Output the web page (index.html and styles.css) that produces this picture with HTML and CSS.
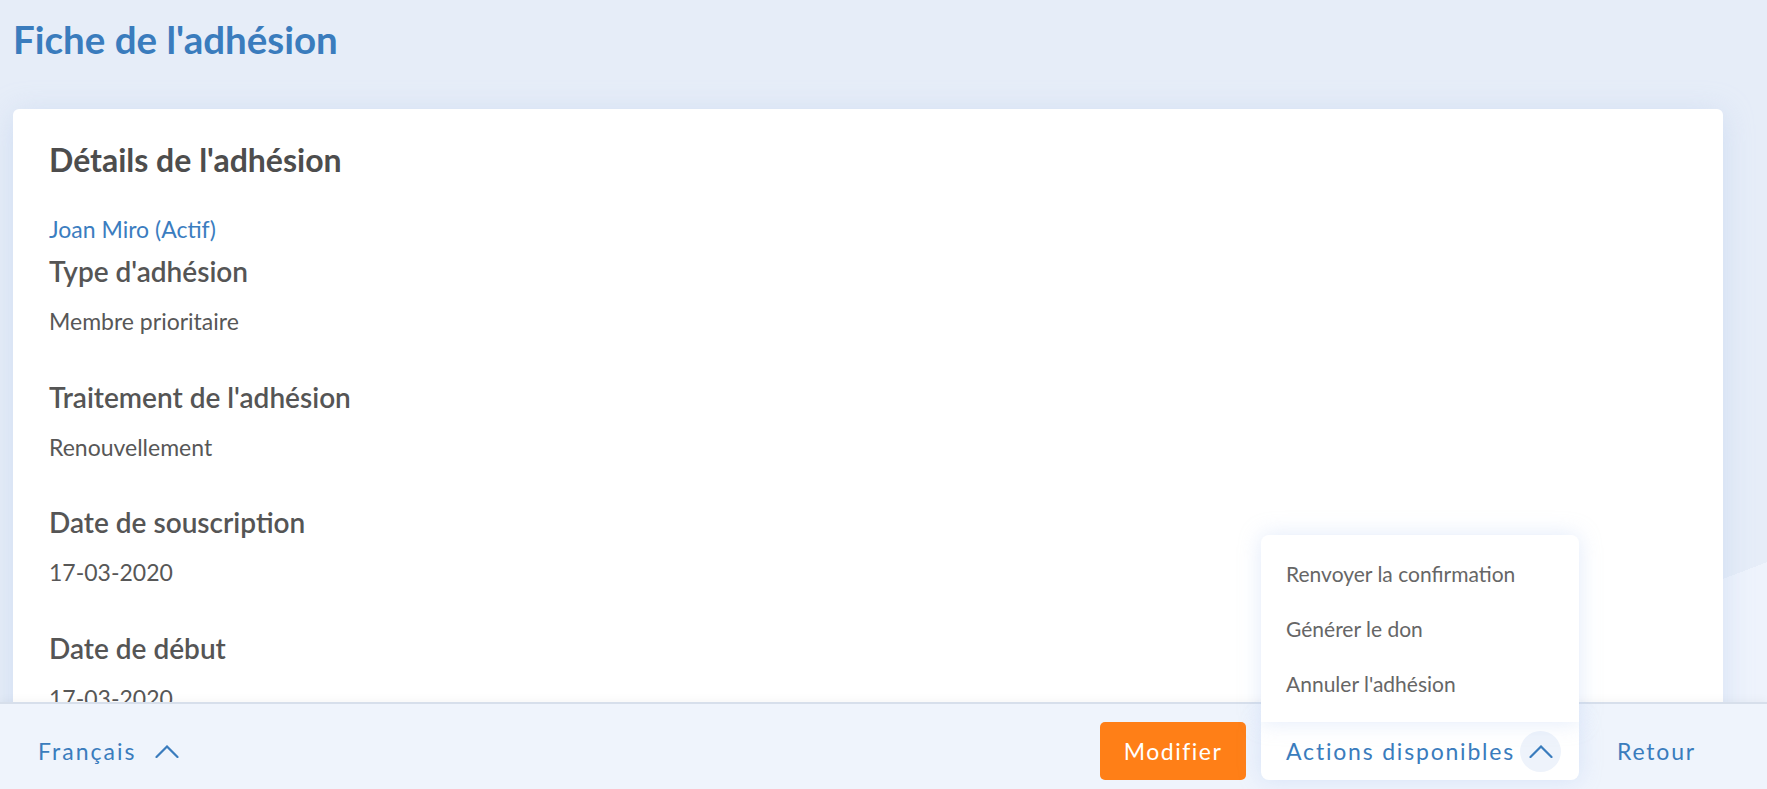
FILE: index.html
```html
<!DOCTYPE html>
<html lang="fr">
<head>
<meta charset="utf-8">
<title>Fiche de l'adhésion</title>
<link rel="stylesheet" href="styles.css">
</head>
<body>
<div class="page">
  <header class="page-header">
    <h1 class="page-title">Fiche de l'adhésion</h1>
  </header>
  <main class="page-main">
    <section class="card">
      <h2 class="card-title">Détails de l'adhésion</h2>
      <a class="member-link" href="#">Joan Miro (Actif)</a>
      <dl class="fields">
        <div class="field">
          <dt class="field-label">Type d'adhésion</dt>
          <dd class="field-value">Membre prioritaire</dd>
        </div>
        <div class="field">
          <dt class="field-label">Traitement de l'adhésion</dt>
          <dd class="field-value">Renouvellement</dd>
        </div>
        <div class="field">
          <dt class="field-label">Date de souscription</dt>
          <dd class="field-value">17-03-2020</dd>
        </div>
        <div class="field">
          <dt class="field-label">Date de début</dt>
          <dd class="field-value">17-03-2020</dd>
        </div>
      </dl>
    </section>
  </main>
  <footer class="page-footer">
    <button class="lang" type="button">
      <span>Français</span>
      <svg class="chev" viewBox="0 0 24 13" width="24" height="13"><path d="M1.5 12 L12 1.5 L22.5 12"/></svg>
    </button>
    <div class="footer-actions">
      <button class="btn-primary" type="button">Modifier</button>
      <div class="actions">
        <ul class="actions-menu">
          <li class="actions-item">Renvoyer la confirmation</li>
          <li class="actions-item">Générer le don</li>
          <li class="actions-item">Annuler l'adhésion</li>
        </ul>
        <button class="actions-toggle" type="button">
          <span>Actions disponibles</span>
          <span class="chev-circle"><svg class="chev" viewBox="0 0 24 13" width="24" height="13"><path d="M1.5 12 L12 1.5 L22.5 12"/></svg></span>
        </button>
      </div>
      <button class="btn-link" type="button">Retour</button>
    </div>
  </footer>
</div>
</body>
</html>
```

FILE: styles.css
```css
* { box-sizing: border-box; }

html, body {
  margin: 0;
  height: 100%;
}

body {
  font-family: Lato, "Noto Sans", sans-serif;
  background: linear-gradient(159deg, #e6edf8 1158px, #eef3fc 1158px);
  overflow: hidden;
}

.page {
  height: 100vh;
  display: flex;
  flex-direction: column;
}

.page-header {
  padding: 16px 13px 0 13px;
}

.page-title {
  margin: 0;
  font-size: 38.5px;
  line-height: 46px;
  font-weight: 700;
  color: #3a7cbd;
}

.page-main {
  flex: 1;
  min-height: 0;
  overflow: hidden;
  padding: 47px 44px 0 13px;
}

.card {
  background: #fff;
  border-radius: 6px;
  box-shadow: 0 4px 30px rgba(175, 198, 236, 0.4);
  padding: 32px 37px 60px 36px;
}

.card-title {
  margin: 0;
  font-size: 32px;
  line-height: 38px;
  font-weight: 700;
  color: #4d4d4d;
}

.member-link {
  display: block;
  margin-top: 36px;
  font-size: 23px;
  line-height: 28px;
  color: #3b7dc0;
  text-decoration: none;
}

.fields {
  margin: 12px 0 0;
  display: flex;
  flex-direction: column;
  gap: 45.5px;
}

.field-label {
  font-size: 28px;
  line-height: 33px;
  font-weight: 600;
  color: #555;
}

.field-value {
  margin: 20px 0 0;
  font-size: 23px;
  line-height: 27px;
  color: #575757;
}

.page-footer {
  flex: 0 0 87px;
  position: relative;
  z-index: 2;
  background: #eff4fc;
  border-top: 2px solid #d7dfeb;
  box-shadow: 0 -3px 8px rgba(0, 0, 0, 0.03);
  display: flex;
  align-items: center;
  justify-content: space-between;
  padding: 18px 71px 9px 38px;
}

button {
  font-family: inherit;
  border: none;
  background: none;
  padding: 0;
  cursor: pointer;
}

.chev {
  display: block;
  fill: none;
  stroke: #3a7cbd;
  stroke-width: 2.2;
  stroke-linecap: round;
  stroke-linejoin: miter;
}

.lang {
  display: flex;
  align-items: center;
  gap: 19px;
  height: 58px;
  font-size: 23px;
  letter-spacing: 2px;
  color: #3a7cbd;
}

.footer-actions {
  display: flex;
  align-items: center;
  height: 58px;
}

.btn-primary {
  width: 146px;
  height: 58px;
  background: #ff7f17;
  color: #fff;
  border-radius: 5px;
  font-size: 23px;
  letter-spacing: 1.5px;
}

.actions {
  position: relative;
  margin-left: 15px;
  width: 318px;
  height: 58px;
  background: #fff;
  border-radius: 0 0 8px 8px;
  box-shadow: 0 0 22px rgba(170, 195, 240, 0.35);
}

.actions-menu {
  position: absolute;
  left: 0;
  right: 0;
  bottom: 100%;
  margin: 0;
  padding: 11px 0;
  list-style: none;
  background: #fff;
  border-radius: 8px 8px 0 0;
  box-shadow: 0 0 22px rgba(170, 195, 240, 0.35);
}

.actions-item {
  padding-left: 25px;
  font-size: 21px;
  line-height: 55px;
  color: #666;
}

.actions-toggle {
  width: 100%;
  height: 58px;
  display: flex;
  align-items: center;
  justify-content: space-between;
  padding: 0 18px 0 25px;
  font-size: 23px;
  letter-spacing: 1.8px;
  color: #3a7cbd;
}

.chev-circle {
  width: 41px;
  height: 41px;
  border-radius: 50%;
  background: #eef3fb;
  display: flex;
  align-items: center;
  justify-content: center;
}

.btn-link {
  margin-left: 38px;
  font-size: 23px;
  letter-spacing: 1.8px;
  color: #3a7cbd;
}
```
